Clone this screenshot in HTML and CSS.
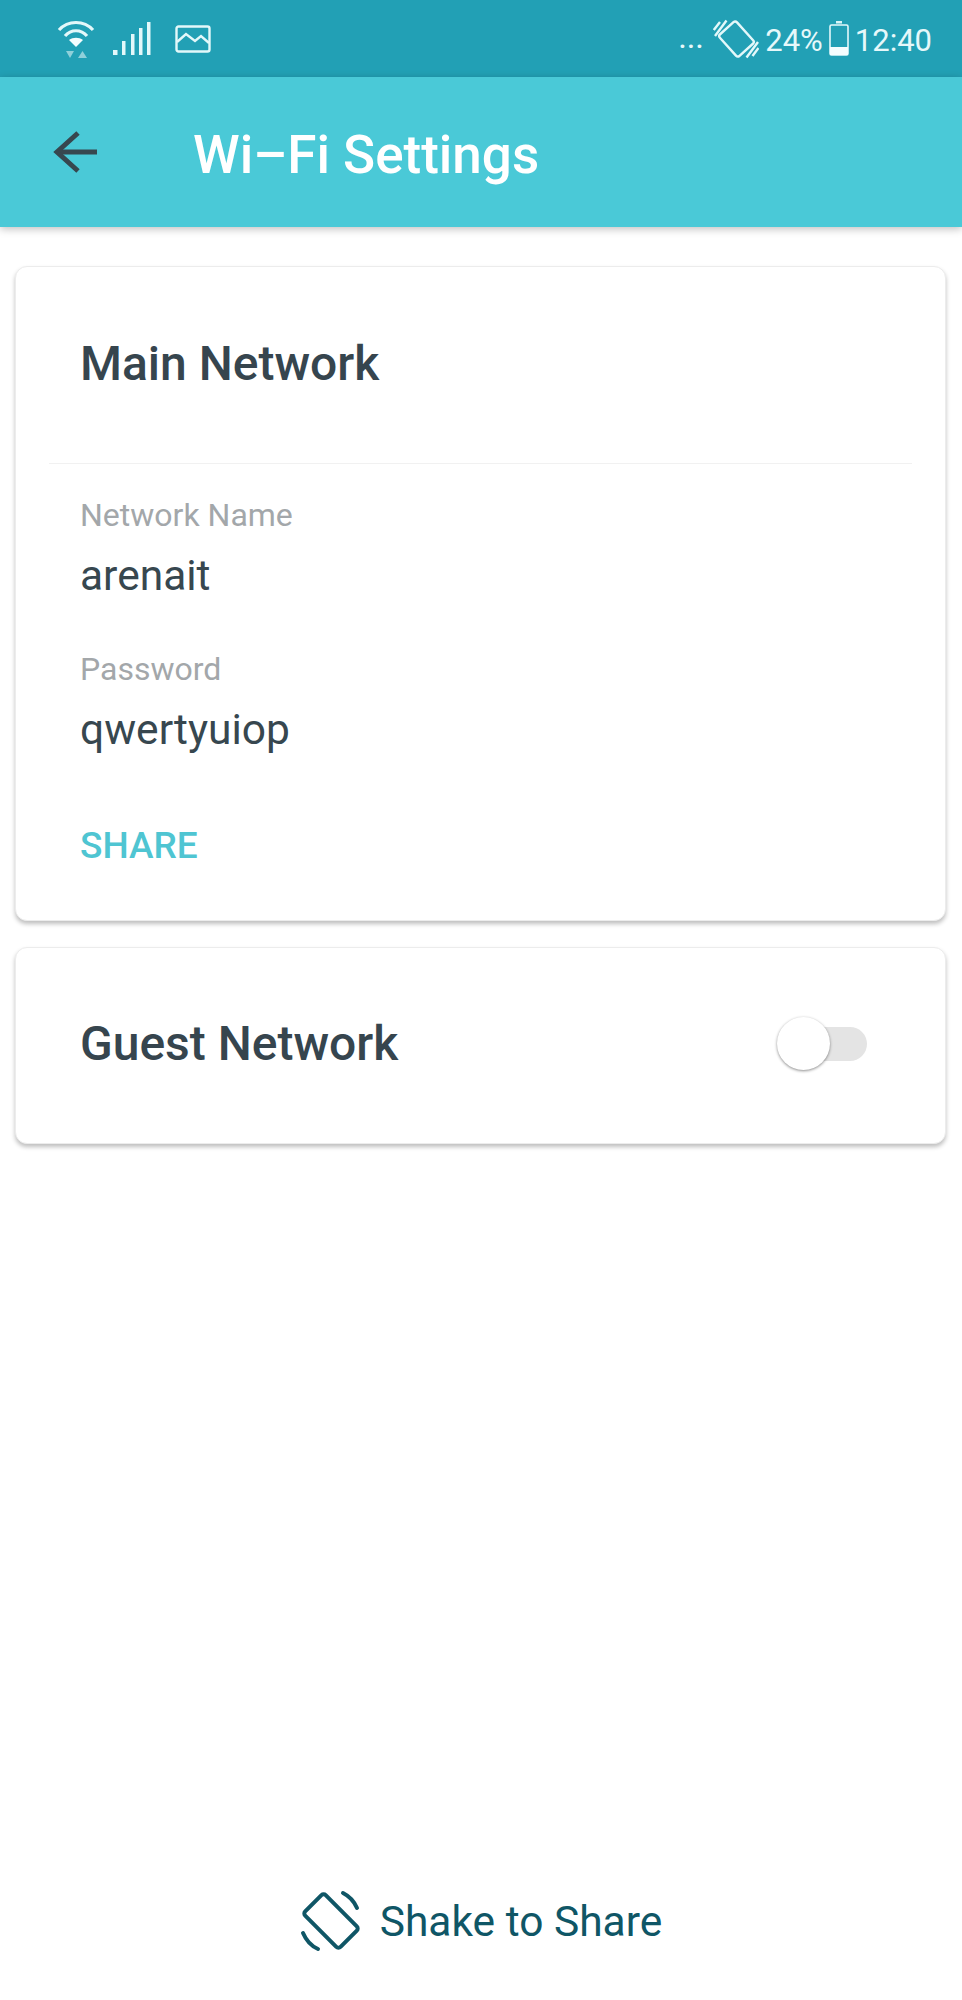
FILE: index.html
```html
<!DOCTYPE html>
<html lang="en">
<head>
    <meta charset="UTF-8">
    <meta name="viewport" content="width=device-width, initial-scale=1.0">
    <title>Wi-Fi Settings</title>
    <link rel="stylesheet" href="styles.css">
</head>
<body>

<div class="page">
    <!-- Phone status bar -->
    <div class="statusBar">
        <div class="statusLeft">
            <svg class="iconWifi" width="38" height="40" viewBox="0 0 38 40" fill="none" stroke="#e3f8fa" stroke-width="3.200">
                <path d="M2 11 C11 1 27 1 36 11"/>
                <path d="M8 17 C14 10 24 10 30 17"/>
                <path d="M12 21 C16 18 22 18 26 21 L19 28 Z" fill="#f4fdfe" stroke="none"/>
                <path d="M9 32 H17 L13 39 Z M21 39 H30 L25.500 32 Z" fill="#8fd0da" stroke="none"/>
            </svg>
            <svg class="iconSignal" width="38" height="34" viewBox="0 0 38 34" fill="#e3f8fa">
                <rect x="0" y="28" width="4.500" height="5"/>
                <rect x="9" y="19" width="3.500" height="14"/>
                <rect x="18" y="12" width="3.500" height="21"/>
                <rect x="26" y="6" width="3.500" height="27"/>
                <rect x="34" y="0" width="3.500" height="33"/>
            </svg>
            <svg class="iconImage" width="36" height="28" viewBox="0 0 36 28" fill="none" stroke="#e3f8fa" stroke-width="2.400">
                <rect x="1.500" y="1.500" width="33" height="25" rx="2"/>
                <path d="M2 17 L11 9 L20 16 L26 11 L34 18"/>
            </svg>
        </div>
        <div class="statusRight">
            <span class="statusDots">...</span>
            <svg class="iconRotate" width="46" height="40" viewBox="0 0 46 40" fill="none" stroke="#e3f8fa" stroke-width="2.400">
                <rect x="12" y="5.500" width="23" height="29" rx="2.500" transform="rotate(-42 23.500 20)"/>
                <path d="M2 17 L13.500 1.500 M0.800 11 L7 3 M45 23 L33.500 38.500 M45.500 29 L39.500 37"/>
            </svg>
            <span class="statusText">24%</span>
            <svg class="iconBattery" width="20" height="35" viewBox="0 0 20 35">
                <rect x="7" y="0" width="6" height="2.500" fill="#d9f5f8"/>
                <rect x="1" y="4" width="18" height="30" rx="1.500" fill="none" stroke="#e3f8fa" stroke-width="1.600"/>
                <rect x="1" y="26" width="18" height="8" fill="#f4fdfe"/>
            </svg>
            <span class="statusText">12:40</span>
        </div>
    </div>

    <!-- Title bar -->
    <div class="titleBar">
        <svg class="backArrow" width="46" height="44" viewBox="0 0 46 44" fill="none" stroke="#37474f" stroke-width="5">
            <path d="M44 22 H4"/>
            <path d="M25 3 L4 22 L25 41"/>
        </svg>
        <h1 class="pageTitle">Wi–Fi Settings</h1>
    </div>

    <!-- Main network card -->
    <div class="card mainCard">
        <div class="cardHead">
            <h2 class="cardTitle">Main Network</h2>
        </div>
        <div class="cardBody">
            <p class="fieldLabel">Network Name</p>
            <p class="fieldValue">arenait</p>
            <p class="fieldLabel secondLabel">Password</p>
            <p class="fieldValue">qwertyuiop</p>
            <p class="shareLink">SHARE</p>
        </div>
    </div>

    <!-- Guest network card -->
    <div class="card guestCard">
        <h2 class="cardTitle">Guest Network</h2>
        <div class="toggle">
            <div class="toggleKnob"></div>
        </div>
    </div>

    <!-- Shake to share -->
    <div class="shakeRow">
        <svg class="shakeIcon" width="62" height="62" viewBox="0 0 62 62" fill="none" stroke="#0f5666" stroke-width="4" stroke-linecap="round" stroke-linejoin="round">
            <rect x="16.500" y="6" width="29" height="50" rx="3" transform="rotate(-45 31 31)"/>
            <path d="M43 3 C49 6 54 11 57 18"/>
            <path d="M3 43 C6 50 11 56 18 59"/>
        </svg>
        <span class="shakeText">Shake to Share</span>
    </div>
</div>

</body>
</html>
```

FILE: styles.css
```css
* {
    box-sizing: border-box;
}

body {
    margin: 0;
    background-color: #fff;
    font-family: Roboto, "Liberation Sans", sans-serif;
}

h1, h2, p {
    margin: 0;
}

.page {
    display: flex;
    flex-direction: column;
    height: 2000px;
}

.statusBar {
    display: flex;
    justify-content: space-between;
    align-items: center;
    height: 77px;
    padding: 0 30px 0 57px;
    background-color: #22a0b5;
}

.statusLeft {
    display: flex;
    align-items: center;
    gap: 18px;
}

.statusLeft .iconImage {
    margin-left: 6px;
}

.statusRight {
    display: flex;
    align-items: center;
    gap: 6px;
    color: #e6f8fa;
    font-size: 31px;
}

.statusText {
    padding-top: 3px;
}

.statusDots {
    margin-right: 3px;
    letter-spacing: 1px;
    font-size: 27px;
    font-weight: 500;
}

.titleBar {
    display: flex;
    align-items: center;
    height: 150px;
    padding-left: 53px;
    background-color: #4ac9d7;
    box-shadow: 0 2px 8px rgba(0, 0, 0, 0.25);
    position: relative;
}

.pageTitle {
    margin: 5px 0 0 94px;
    color: #fff;
    font-size: 53px;
    font-weight: 500;
}

.card {
    margin: 0 16px 0 15px;
    background-color: #fff;
    border: 1px solid #ececec;
    border-radius: 12px;
    box-shadow: 0 3px 4px rgba(0, 0, 0, 0.25);
}

.mainCard {
    height: 655px;
    margin-top: 39px;
}

.cardHead {
    height: 197px;
    margin: 0 33px;
    padding: 70px 0 0 31px;
    border-bottom: 1px solid #f1f1f1;
}

.cardTitle {
    color: #36454e;
    font-size: 48px;
    font-weight: 500;
    line-height: 54px;
}

.cardBody {
    padding: 31px 0 0 64px;
}

.fieldLabel {
    color: #a3a7aa;
    font-size: 32px;
    line-height: 40px;
}

.secondLabel {
    margin-top: 49px;
}

.fieldValue {
    margin-top: 17px;
    color: #37474f;
    font-size: 42.500px;
    line-height: 48px;
}

.shareLink {
    margin-top: 70px;
    color: #4fc5d2;
    font-size: 37px;
    font-weight: 500;
    line-height: 44px;
}

.guestCard {
    display: flex;
    justify-content: space-between;
    align-items: center;
    height: 197px;
    margin-top: 26px;
    padding: 0 78px 3px 64px;
}

.toggle {
    position: relative;
    width: 78px;
    height: 34px;
    border-radius: 17px;
    background-color: #e4e4e4;
}

.toggleKnob {
    position: absolute;
    left: -12px;
    top: -10px;
    width: 53px;
    height: 53px;
    border-radius: 50%;
    background-color: #fff;
    box-shadow: 0 1px 3px rgba(0, 0, 0, 0.45);
}

.shakeRow {
    display: flex;
    justify-content: center;
    align-items: center;
    gap: 18px;
    margin-top: auto;
    margin-bottom: 48px;
}

.shakeText {
    color: #0f5666;
    font-size: 42.500px;
}
```
